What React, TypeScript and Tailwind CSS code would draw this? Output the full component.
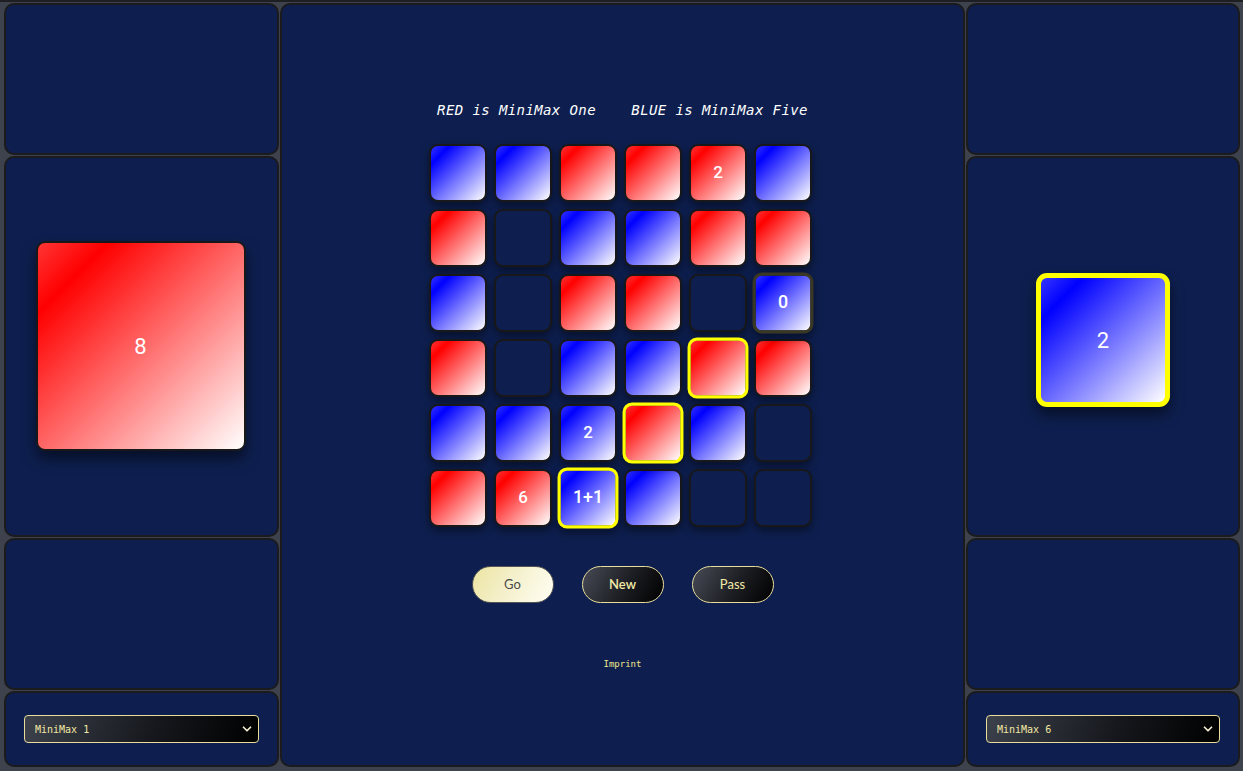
import React from 'react';
import { ChevronDown } from 'lucide-react';

type Cell = {
  c: 'R' | 'B' | 'E';
  label?: string;
  ring?: 'yellow' | 'olive';
};

const board: Cell[][] = [
  [{ c: 'B' }, { c: 'B' }, { c: 'R' }, { c: 'R' }, { c: 'R', label: '2' }, { c: 'B' }],
  [{ c: 'R' }, { c: 'E' }, { c: 'B' }, { c: 'B' }, { c: 'R' }, { c: 'R' }],
  [{ c: 'B' }, { c: 'E' }, { c: 'R' }, { c: 'R' }, { c: 'E' }, { c: 'B', label: '0', ring: 'olive' }],
  [{ c: 'R' }, { c: 'E' }, { c: 'B' }, { c: 'B' }, { c: 'R', ring: 'yellow' }, { c: 'R' }],
  [{ c: 'B' }, { c: 'B' }, { c: 'B', label: '2' }, { c: 'R', ring: 'yellow' }, { c: 'B' }, { c: 'E' }],
  [{ c: 'R' }, { c: 'R', label: '6' }, { c: 'B', label: '1+1', ring: 'yellow' }, { c: 'B' }, { c: 'E' }, { c: 'E' }],
];

const redBg = 'bg-[linear-gradient(135deg,#ff3535_0%,#ff0000_17%,#ffffff_100%)]';
const blueBg = 'bg-[linear-gradient(135deg,#3535ff_0%,#0000ff_17%,#ffffff_100%)]';

const panel = 'rounded-[10px] border-2 border-[#1b1b1d] bg-[#0e1f4f]';

const Tile: React.FC<{ cell: Cell }> = ({ cell }) => {
  const fill = cell.c === 'R' ? redBg : cell.c === 'B' ? blueBg : 'bg-[#0e1f4f]';
  const border =
    cell.ring === 'yellow'
      ? 'border-[3px] border-[#ffff00] scale-[1.05]'
      : cell.ring === 'olive'
        ? 'border-[3px] border-[#3a3722] scale-[1.05]'
        : 'border-2 border-[#18181a]';
  return (
    <div
      className={`flex h-[58px] w-[58px] items-center justify-center rounded-[9px] ${fill} ${border} shadow-[0_4px_8px_rgba(0,0,0,0.45)] font-['Roboto',sans-serif] text-[17px] font-medium text-white`}
    >
      {cell.label}
    </div>
  );
};

const Select: React.FC<{ value: string }> = ({ value }) => (
  <div className="relative w-full">
    <select
      defaultValue={value}
      className="h-[28px] w-full appearance-none rounded-[4px] border border-[#e8dd9a] bg-[linear-gradient(110deg,#3c414c_0%,#16181d_55%,#000000_100%)] pl-[10px] font-['DejaVu_Sans_Mono',monospace] text-[10px] text-[#f3e9a6] outline-none"
    >
      <option>MiniMax 1</option>
      <option>MiniMax 2</option>
      <option>MiniMax 3</option>
      <option>MiniMax 4</option>
      <option>MiniMax 5</option>
      <option>MiniMax 6</option>
    </select>
    <ChevronDown className="pointer-events-none absolute right-[5px] top-[7px] h-[14px] w-[14px] text-[#f5efd0]" strokeWidth={3} />
  </div>
);

export default function App() {
  return (
    <div className="grid h-[771px] w-full grid-cols-[275px_1fr_274px] grid-rows-[2fr_5fr_2fr_1fr] gap-[1px] border-t-2 border-[#1e1f22] bg-[#3e424c] pb-[4px] pl-[4px] pr-[3px] pt-[1px]">
      <div className={panel} />

      <div className={`${panel} row-span-4 flex flex-col items-center pt-[95px]`}>
        <div className="whitespace-pre font-['DejaVu_Sans_Mono',monospace] text-[14px] italic leading-[20px] tracking-[0.4px] text-white">
          {'RED is MiniMax One    BLUE is MiniMax Five'}
        </div>
        <div className="mr-[4px] mt-[24px] grid grid-cols-[repeat(6,58px)] gap-[7px]">
          {board.flat().map((cell, i) => (
            <Tile key={i} cell={cell} />
          ))}
        </div>
        <div className="mt-[39px] flex gap-[28px] font-['Lato',sans-serif] text-[13px]">
          <button className="h-[37px] w-[82px] rounded-full border border-[#555] bg-[linear-gradient(120deg,#ece4a2_0%,#f5f1cf_50%,#fffff4_100%)] text-[#4a4a4a]">
            Go
          </button>
          <button className="h-[37px] w-[82px] rounded-full border border-[#e8dd9a] bg-[linear-gradient(120deg,#474b56_0%,#1c1d22_55%,#000000_100%)] font-semibold text-[#f3eaa8]">
            New
          </button>
          <button className="h-[37px] w-[82px] rounded-full border border-[#e8dd9a] bg-[linear-gradient(120deg,#474b56_0%,#1c1d22_55%,#000000_100%)] text-[#f3eaa8]">
            Pass
          </button>
        </div>
        <div className="mt-[54px] font-['DejaVu_Sans_Mono',monospace] text-[9px] leading-[14px] text-[#f0e68c]">Imprint</div>
      </div>

      <div className={`${panel} col-start-3 row-start-1`} />

      <div className={`${panel} col-start-1 row-start-2 flex items-center justify-center`}>
        <div className={`mr-[2px] flex h-[210px] w-[210px] items-center justify-center rounded-[9px] border-2 border-[#18181a] ${redBg} shadow-[0_8px_14px_rgba(0,0,0,0.5)] font-['Roboto',sans-serif] text-[22px] text-white`}>
          8
        </div>
      </div>

      <div className={`${panel} col-start-3 row-start-2 flex items-center justify-center`}>
        <div className={`mb-[12px] flex h-[134px] w-[134px] items-center justify-center rounded-[11px] border-[5px] border-[#ffff00] ${blueBg} shadow-[0_8px_14px_rgba(0,0,0,0.5)] font-['Roboto',sans-serif] text-[22px] text-white`}>
          2
        </div>
      </div>

      <div className={`${panel} col-start-1 row-start-3`} />
      <div className={`${panel} col-start-3 row-start-3`} />

      <div className={`${panel} col-start-1 row-start-4 flex items-center px-[18px]`}>
        <Select value="MiniMax 1" />
      </div>
      <div className={`${panel} col-start-3 row-start-4 flex items-center px-[18px]`}>
        <Select value="MiniMax 6" />
      </div>
    </div>
  );
}
